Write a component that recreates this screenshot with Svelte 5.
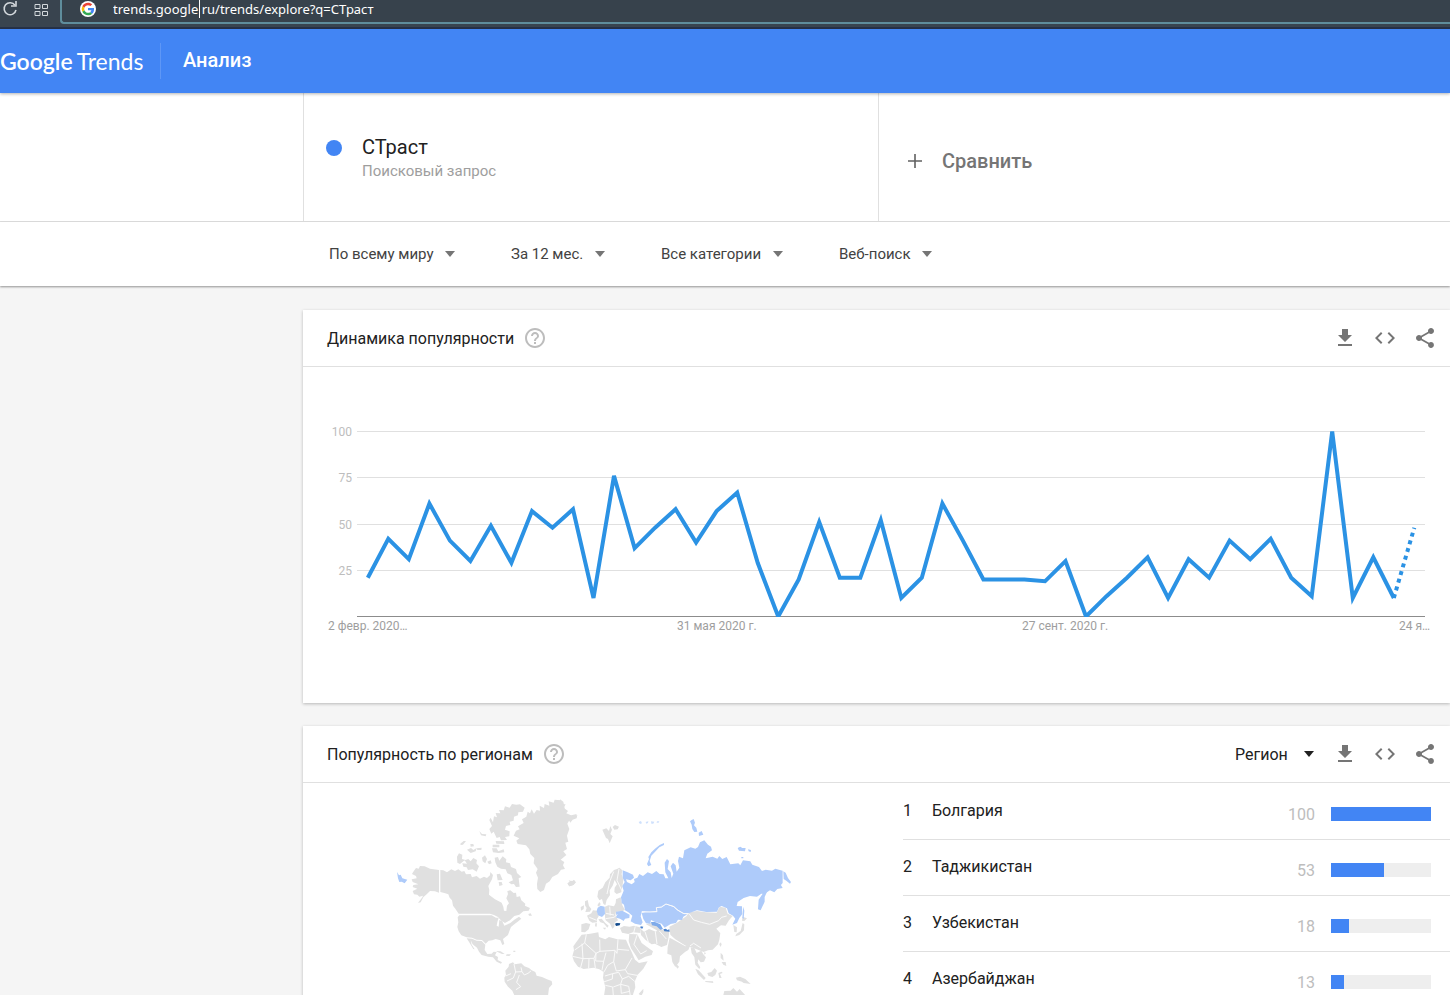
<script>
  const values = [
    21, 42, 31, 61, 41, 30, 49, 29, 57, 48, 58, 10, 76, 37, 48, 58, 40, 57, 67, 29, 0, 20, 51, 21, 21, 52, 10, 21, 61,
    41, 20, 20, 20, 19, 30, 0, 11, 21, 32, 10, 31, 21, 41, 31, 42, 21, 11, 100, 10, 32, 10, 48
  ];
  const point = (v, i) => `${(64.8 + i * 20.52).toFixed(1)},${(249.5 - v * 1.85).toFixed(1)}`;
  const points = values.map(point);
  const solid = points.slice(0, -1).join(' ');
  const dotted = points.slice(-2).join(' ');

  const ticks = [
    { label: 100, y: 64.5 },
    { label: 75, y: 110.5 },
    { label: 50, y: 157.5 },
    { label: 25, y: 203.5 }
  ];

  const dates = [
    { label: '2 февр. 2020…', x: 25 },
    { label: '31 мая 2020 г.', x: 374 },
    { label: '27 сент. 2020 г.', x: 719 },
    { label: '24 я…', x: 1096 }
  ];

  const filters = ['По всему миру', 'За 12 мес.', 'Все категории', 'Веб-поиск'];

  const regions = [
    { name: 'Болгария', value: 100 },
    { name: 'Таджикистан', value: 53 },
    { name: 'Узбекистан', value: 18 },
    { name: 'Азербайджан', value: 13 }
  ];
</script>

{#snippet help()}
  <button class="icon help" aria-label="Справка">
    <svg viewBox="0 0 24 24"><path d="M11 18h2v-2h-2v2zm1-16C6.48 2 2 6.48 2 12s4.48 10 10 10 10-4.48 10-10S17.52 2 12 2zm0 18c-4.41 0-8-3.59-8-8s3.59-8 8-8 8 3.59 8 8-3.59 8-8 8zm0-14c-2.21 0-4 1.79-4 4h2c0-1.1.9-2 2-2s2 .9 2 2c0 2-3 1.75-3 5h2c0-2.25 3-2.5 3-5 0-2.21-1.79-4-4-4z" /></svg>
  </button>
{/snippet}

{#snippet actions()}
  <button class="icon" aria-label="Скачать">
    <svg viewBox="0 0 24 24"><path d="M19 9h-4V3H9v6H5l7 7 7-7zM5 18v2h14v-2H5z" /></svg>
  </button>
  <button class="icon" aria-label="Встроить">
    <svg viewBox="0 0 24 24"><path d="M9.4 16.6L4.8 12l4.6-4.6L8 6l-6 6 6 6 1.4-1.4zm5.2 0l4.6-4.6-4.6-4.6L16 6l6 6-6 6-1.4-1.4z" /></svg>
  </button>
  <button class="icon" aria-label="Поделиться">
    <svg viewBox="0 0 24 24"><path d="M18 16.08c-.76 0-1.44.3-1.96.77L8.91 12.7c.05-.23.09-.46.09-.7s-.04-.47-.09-.7l7.05-4.11c.54.5 1.25.81 2.04.81 1.66 0 3-1.34 3-3s-1.34-3-3-3-3 1.34-3 3c0 .24.04.47.09.7L8.04 9.81C7.5 9.31 6.79 9 6 9c-1.66 0-3 1.34-3 3s1.34 3 3 3c.79 0 1.5-.31 2.04-.81l7.12 4.16c-.05.21-.08.43-.08.65 0 1.61 1.31 2.92 2.92 2.92 1.61 0 2.92-1.31 2.92-2.92s-1.31-2.92-2.92-2.92z" /></svg>
  </button>
{/snippet}

<div class="page">
  <div class="browser">
    <button class="tool" aria-label="Обновить">
      <svg width="16" height="16" viewBox="0 0 16 16" fill="none" stroke="#d3d8dc" stroke-width="1.6"><path d="M13 4.2A6 6 0 1 0 14 9" /><path d="M14 0v5H9" /></svg>
    </button>
    <button class="tool" aria-label="Экспресс-панель">
      <svg width="14" height="14" viewBox="0 0 14 14" fill="none" stroke="#d3d8dc"><path d="M1 2.500h5v4H1zM8.500 2.500h5v4h-5zM1 9.500h5v4H1zM8.500 9.500h5v4h-5z" /></svg>
    </button>
    <div class="address">
      <svg width="16" height="16" viewBox="0 0 48 48">
        <circle cx="24" cy="24" r="24" fill="#fff" />
        <g transform="translate(5 5) scale(.79)">
          <path fill="#ea4335" d="M24 9.500c3.540 0 6.710 1.220 9.210 3.600l6.850-6.850C35.900 2.380 30.470 0 24 0 14.620 0 6.510 5.380 2.560 13.220l7.980 6.190C12.430 13.720 17.740 9.500 24 9.500z" />
          <path fill="#4285f4" d="M46.980 24.550c0-1.570-.15-3.090-.38-4.550H24v9.020h12.940c-.58 2.960-2.260 5.480-4.780 7.180l7.730 6c4.510-4.180 7.090-10.360 7.090-17.650z" />
          <path fill="#fbbc05" d="M10.530 28.590a14.500 14.500 0 0 1 0-9.180l-7.980-6.190a24 24 0 0 0 0 21.560l7.980-6.190z" />
          <path fill="#34a853" d="M24 48c6.480 0 11.930-2.130 15.890-5.810l-7.730-6c-2.150 1.450-4.920 2.300-8.160 2.300-6.260 0-11.570-4.220-13.470-9.910l-7.980 6.190C6.510 42.620 14.620 48 24 48z" />
        </g>
      </svg>
      <div class="url">
        <input aria-label="Адрес" value="trends.google ru/trends/explore?q=СТраст" />
        <span class="caret"></span>
      </div>
    </div>
  </div>

  <header>
    <a class="brand" href="#trends"><b>Google</b><span>Trends</span></a>
    <h1>Анализ</h1>
  </header>

  <section class="query">
    <div class="term">
      <span class="dot"></span>
      <div>
        <div class="name">СТраст</div>
        <div class="kind">Поисковый запрос</div>
      </div>
    </div>
    <button class="compare">
      <svg width="14" height="14" viewBox="0 0 14 14" stroke="#616161" stroke-width="1.600"><path d="M7 0v14M0 7h14" /></svg>
      <span>Сравнить</span>
    </button>
  </section>

  <nav>
    {#each filters as filter}
      <div class="drop">
        <select aria-label={filter}><option>{filter}</option></select>
        <svg width="10" height="6" viewBox="0 0 10 6"><path d="M0 0h10L5 6z" /></svg>
      </div>
    {/each}
  </nav>

  <main>
    <section class="card">
      <div class="head">
        <h2>Динамика популярности</h2>
        {@render help()}
        <div class="actions">{@render actions()}</div>
      </div>
      <svg class="chart" viewBox="0 0 1147 336" role="img" aria-label="Динамика популярности">
        <defs>
          <clipPath id="plot"><path d="M54 64H1122V250H54z" /></clipPath>
        </defs>
        {#each ticks as tick}
          <path d="M54 {tick.y}H1122" stroke="#e0e0e0" />
          <text class="tick" x="49" y={tick.y + 4} text-anchor="end">{tick.label}</text>
        {/each}
        <path d="M54 249.500H1122" stroke="#8c8c8c" />
        <g clip-path="url(#plot)">
          <polyline points={solid} />
          <polyline points={dotted} stroke-dasharray="4 4" />
        </g>
        {#each dates as date}
          <text class="date" x={date.x} y="263">{date.label}</text>
        {/each}
      </svg>
    </section>

    <section class="card">
      <div class="head">
        <h2>Популярность по регионам</h2>
        {@render help()}
        <div class="actions">
          <div class="drop dark">
            <select aria-label="Детализация"><option>Регион</option></select>
            <svg width="10" height="6" viewBox="0 0 10 6"><path d="M0 0h10L5 6z" /></svg>
          </div>
          {@render actions()}
        </div>
      </div>
      <div class="split">
        <svg class="map" viewBox="0 0 600 330" role="img" aria-label="Карта мира">
          <g transform="translate(77 7) scale(.3333)">
            <g class="land">
              <path d="M100 245L108 234 116 236 120 228 134 229 150 236 177 240 177 308 165 304 150 303 140 313 130 322 122 337 114 339 127 322 129 317 118 320 112 314 102 313 98 303 112 296 98 291 100 285 115 283 98 276 95 268 110 265 108 258 96 252Z" />
              <path d="M181 240L190 241 201 247 214 238 225 243 235 238 245 245 253 243 258 253 272 252 276 262 290 258 300 266 312 260 321 264 330 256 331 246 339 255 336 268 325 288 328 300 327 314 345 328 365 338 370 350 372 362 379 363 381 347 387 340 379 325 384 312 382 303 391 301 401 309 408 308 410 321 420 319 424 331 436 341 435 347 450 354 446 362 430 364 418 374 403 378 390 391 375 399 364 392 354 381 342 375 330 371 236 371 226 356 219 347 216 331 209 323 205 313 193 309 181 306Z" />
              <path d="M238 376H335L348 383 356 383 352 397 350 407 356 410 358 390 367 394 373 407 383 403 392 398 403 389 417 380 424 386 413 395 403 403 393 411 388 424 384 435 369 447 373 462 367 465 361 451 347 447 337 451 326 452 317 461 306 450 290 449 276 443 260 442 244 436 236 424 232 411 235 397 233 382Z" />
              <path d="M260 445L276 446 290 452 305 453 316 464 314 480 322 492 335 491 341 485 350 486 345 496 354 501 353 510 366 517 363 521 350 515 339 502 325 500 305 495 297 485 291 473 278 463 272 451 275 464 284 478 280 477 269 459Z" />
              <path d="M348 483L362 484 374 492 366 492 353 486ZM380 493L393 493 388 498 378 497ZM445 372L452 370 456 377 447 377ZM400 482h6v4h-6z" />
              <path d="M378 555L376 542 386 530 387 522 399 517 404 523 424 520 433 529 447 534 455 541 466 546 470 557 486 561 501 568 515 573 517 583 507 594 504 618H404L397 602 384 590 374 575 373 563Z" />
              <path d="M401 137L408 122 419 118 414 109 431 99 426 88 439 80 443 65 450 70 455 58 462 71 470 60 480 62 479 47 492 54 494 42 508 47 506 34 521 38 524 29 544 31 541 42 557 43 551 53 564 63 559 70 573 76 580 83 570 86 562 101 568 117 561 137 565 155 556 158 561 177 550 184 559 195 542 209 553 216 549 226 555 237 543 239 534 252 517 261 509 274 498 281 492 300 481 306 472 297 471 281 474 263 468 248 473 237 461 220 463 204 451 192 448 178 438 166 413 162 409 152 418 145Z" />
              <path d="M567 91L571 80 592 75 590 85 578 89 571 98ZM563 281L569 275 566 271 576 274 582 269 588 277 580 285 568 289Z" />
              <path d="M328 90L332 83 339 97 342 79 351 82 347 69 361 70 357 60 371 61 375 49 389 53 396 42 409 44 420 43 434 53 429 65 415 67 414 76 402 80 401 92 389 95 391 105 378 108 375 119 389 124 388 139 375 141 381 150 363 151 359 141 350 144 341 125 334 131 328 117 336 108Z" />
              <path d="M338 164h20v8h-20zM347 153l25 1 1 8-24-1zM336 175l14 0 5 9 16-6 2 9-17 2-17-2zM298 123l8 9 13 1-2 6-14-3zM241 161l10-8 7 0-9 11-7 1zM271 162l9 0 2 7-10 1zM261 179l12-5 7 6 10-6-3 10-15 5zM290 175l15-2-1 7-12 0zM306 203l9-7 6 11-5 13-8-6zM322 215l10-4 3 9-8 3z" />
              <path d="M231 200L237 190 247 194 246 207 257 210 251 213 240 222 232 218ZM254 211L265 207 272 214 280 204 291 210 289 220 297 229 290 245 278 238 264 240 260 232 250 230 247 220 261 221Z" />
              <path d="M344 203L354 201 358 212 368 199 379 208 378 217 390 220 393 231 408 237 411 249 424 261 416 265 419 290 408 291 402 282 394 283 386 277 399 271 394 255 382 250 377 238 363 236 352 230 346 217ZM350 253l10-2 8 19-15 1zM356 276l9 0 3 9-10 3z" />
            </g>
            <path class="blue" d="M51 246L57 256 62 254 67 265 82 269 74 280 65 275 58 276 54 265Z" />
            <path class="border" d="M402 522L407 546 426 545 433 555 444 550 453 543M407 546L400 564 381 573M377 558L393 551M426 545L423 532M418 555L410 577 422 590 408 599" />
          </g>
          <g transform="translate(257 7) scale(.3333)">
            <g class="land">
              <path d="M0 28L10 35 14 55 8 70 15 80 50 72 47 82 30 91 20 97 0 90ZM22 280L35 272 47 277 40 285 28 289Z" />
              <path d="M127 119L139 115 147 123 151 108 156 119 151 132 158 139 149 160 144 147 138 144ZM158 111L165 105 177 110 173 118 163 119Z" />
              <path d="M112 320L115 302 128 293 136 277 149 263 150 253 162 240 171 237 178 233 187 241 185 253 190 270 187 292 184 307 170 312 163 306 164 293 171 283 164 270 158 287 149 301 150 315 140 330 136 346 130 341 126 327 118 331Z" />
              <path d="M168 328L182 322 187 346 195 360 188 363 168 366 166 374 174 391 164 398 163 411 157 416 150 401 137 391 135 381 135 350 145 346 162 349 167 339ZM112 346L118 336 122 342 117 350Z" />
              <path d="M62 351L72 346 71 357 63 362ZM75 334L83 330 87 348 94 357 90 365 76 366 80 354 75 346ZM81 377L94 370 99 361 111 362 116 379 111 387 111 397 97 398 88 392ZM64 403L78 399 91 402 86 418 75 427 64 426ZM115 388L125 386 136 399 146 407 142 413 131 400 121 397ZM128 413l10 0-3 6zM106 400l5 0-1 10-5-1z" />
              <path d="M180 414L192 408 209 410 222 407 240 412 241 429 219 427 205 432 186 428Z" />
              <path d="M208 432L232 433 245 459 258 469 279 484 275 495 256 500 236 511 228 497 213 475 206 453ZM240 415L252 425 267 417 288 425 296 414 309 420 328 424 326 442 321 465 304 471 285 461 275 463 257 450 243 435ZM258 403l16-5 20 6 12 15-13 3-24-13z" />
              <path d="M328 410L350 399 379 379 387 367 411 363 438 367 470 368 479 350 497 353 503 371 518 378 507 391 497 407 483 406 469 416 481 430 478 449 474 463 458 479 444 481 431 486 414 479 398 473 377 467 346 448 331 434Z" />
              <path d="M329 443L342 450 376 469 391 466 385 480 375 486 360 499 358 515 346 531 337 516 334 496 322 491 323 472ZM350 523l7 7-4 6-5-6zM392 472L403 474 410 489 424 482 430 493 438 502 432 515 422 517 415 508 413 518 421 532 418 537 406 524 403 501 395 490Z" />
              <path d="M406 536L416 541 437 564 432 570 414 553ZM442 549L454 546 464 534 471 542 466 555 457 561 445 557ZM475 549l10-4 3 4-8 3 5 12-7 0zM435 573l24 1 1 5-23-3zM482 488l7 8 2 16-9-8zM485 516l12 0 2 12-9-4zM528 563L540 560 556 567 572 582 551 579 546 575 531 571ZM478 462l5-5 2 7-4 7zM432 487l6 2-4 5z" />
              <path d="M548 399L553 403 552 421 538 435 526 439 529 432 542 423ZM548 380l13 5-8 8-7-1zM520 405l11 7-1 15-7-1zM490 615L493 603 512 602 520 594 531 605 539 597 557 617ZM236 612l14-16 0 10-6 12z" />
              <path d="M65 434L91 431 115 427 117 441 136 448 147 441 172 448 198 449 205 466 214 484 225 509 237 519 263 514 250 536 233 554 224 575 226 592 218 617H132L136 592 129 563 131 546 118 538 101 533 71 537 54 530 42 514 37 499 42 481 40 469Z" />
            </g>
            <g class="blue">
              <path d="M188 241L203 247 219 254 222 263 212 271 198 268 201 276 215 283 224 276 222 267 232 263 238 252 249 258 263 247 276 252 289 243 299 252 311 253 316 265 325 265 316 247 314 218 321 207 327 213 323 237 332 247 335 264 340 251 332 229 339 218 347 226 350 245 358 233 354 213 357 200 369 205 373 181 392 172 406 176 414 171 420 157 433 151 444 164 453 170 456 181 442 191 437 205 458 200 472 206 478 198 487 207 500 201 511 223 535 220 541 226 549 211 571 214 577 224 597 231 606 243 617 239 636 242 646 236 668 242V279L663 285 668 294 652 297 643 307 630 301 613 312 604 311 591 320 570 318 551 324 533 336 530 348 546 349 547 372 538 384 531 399 517 404 526 386 519 377 506 370 501 355 485 348 477 352 471 365 439 366 411 361 386 370 370 370 351 358 340 348 318 342 304 351 289 353 291 364 270 365 246 364 242 379 248 397 243 405 225 401 212 394 217 377 205 367 195 361 192 344 185 339 183 322 191 302 187 288 194 276 188 263Z" />
              <path d="M670 244L677 248 684 264 693 276 690 281 679 272 671 267ZM626 295L614 321 614 335 602 361 594 358 596 329 607 313 616 303ZM261 222L267 207 265 201 274 187 285 176 299 165 312 159 312 165 298 172 284 187 274 197 269 213 274 225 265 229ZM390 94L395 90 401 87 405 98 402 106 409 113 412 125 403 126 397 117 395 104ZM416 128L425 123 430 134 417 138ZM533 174L541 170 547 174 557 174 555 184 537 182ZM564 178l9 2-1 6-6-2zM544 201h6v4h-6zM550 350l3 12-2 25-4-3z" />
              <path opacity=".6" d="M236 96l7-3 3 7-6 2zM257 96l8-2-1 5-5 2zM273 94l10 1-3 6-6 0zM291 94l7 0-2 4-6 0z" />
              <path d="M113 353L122 347 134 350 135 372 126 381 114 376 110 363ZM168 365L187 362 209 374 208 384 195 386 191 393 180 386 169 383Z" />
              <path d="M245 369L258 365 290 366 291 354 306 352 318 343 340 350 352 361 370 371 382 373 370 380 366 390 354 389 348 399 332 402 314 413 305 401 285 396 273 390 271 401 258 400 250 387Z" />
            </g>
            <path class="border" d="M245 366L270 366 291 365 289 353 304 351 318 342 342 350 354 361 372 371 386 371M388 372L401 390 424 397 449 403 476 392 485 382 500 378M161 245L149 275 141 312M177 237L171 271 187 305M138 370L162 375M137 386L162 382 172 374M149 350L151 376M88 382L110 391M226 409L220 432M255 425L266 459M286 425L291 462M298 423L319 447M232 433L222 463 242 492 260 482M390 468L401 460 423 474" />
            <path class="border" d="M79 433L74 459 44 480M74 459L108 490 120 484 119 449M120 484L165 481 171 490 174 448M174 478L207 481M66 461L69 506 37 499M69 506L61 536M69 506L102 505 108 490M87 506L86 535M102 505L106 534M108 490L107 513 131 514 138 488M131 514L126 541M165 483L161 515 143 526 132 546M161 515L169 543 196 539 216 504M196 539L203 551 236 557M135 558L158 551 157 567 131 576M158 551L176 547 187 567 182 583 206 589 211 617M187 567L206 559 224 574M136 586L158 591 160 617M160 591L182 583M182 583L184 610 209 604" />
            <path class="mid" d="M273 396L285 396 301 403 309 417 301 419 290 409 276 406Z" />
            <path class="deep" d="M310 418L318 416 322 420 328 418 329 425 313 424ZM242 409l8 1-3 6-6-2z" />
            <path class="top" d="M165 401L170 399 181 400 179 406 168 408Z" />
          </g>
        </svg>
        <table>
          <tbody>
            {#each regions as region, i}
              <tr>
                <td class="rank">{i + 1}</td>
                <td>{region.name}</td>
                <td class="score">{region.value}</td>
                <td class="meter"><div class="track"><div class="fill" style="width: {region.value}%"></div></div></td>
              </tr>
            {/each}
          </tbody>
        </table>
      </div>
    </section>
  </main>
</div>

<style>
  :global(body) {
    background: #f5f5f5;
  }
  .page {
    display: flex;
    flex-direction: column;
    height: 100vh;
    overflow: hidden;
    font-family: Roboto, sans-serif;
    color: #212121;
  }
  .page > * {
    flex-shrink: 0;
    box-sizing: border-box;
  }
  button,
  select,
  input {
    margin: 0;
    padding: 0;
    border: 0;
    background: none;
    font: inherit;
    color: inherit;
  }
  select {
    appearance: none;
  }
  svg {
    display: block;
  }
  h1,
  h2 {
    margin: 0;
  }
  .browser {
    display: flex;
    height: 29px;
    gap: 16px;
    padding-left: 2px;
    background: #39444f;
    border-bottom: 2px solid #26324a;
  }
  .tool {
    height: 17px;
  }
  .address {
    flex: 1;
    display: flex;
    align-items: center;
    gap: 17px;
    height: 24px;
    box-sizing: border-box;
    margin-left: -4px;
    padding: 0 0 5px 18px;
    border: solid #5f8d9c;
    border-width: 0 0 2px 2px;
    border-bottom-left-radius: 4px;
    background: #37424c;
  }
  .url {
    position: relative;
    flex: 1;
  }
  .url input {
    display: block;
    width: 100%;
    height: 18px;
    font: 13px/18px "Noto Sans", "Open Sans", sans-serif;
    color: #fff;
  }
  .caret {
    position: absolute;
    left: 86px;
    top: 0;
    width: 1px;
    height: 18px;
    background: #fff;
  }
  header {
    position: relative;
    display: flex;
    align-items: center;
    height: 64px;
    background: #4285f4;
    color: #fff;
    box-shadow: 0 1px 3px rgba(0, 0, 0, 0.3);
  }
  .brand {
    display: flex;
    align-items: center;
    gap: 4px;
    height: 36px;
    width: 160px;
    border-right: 1px solid #5e97f6;
    font: 23px/36px Lato, sans-serif;
    color: #fff;
    text-decoration: none;
  }
  .brand b {
    font-weight: 600;
  }
  h1 {
    margin-left: 22px;
    font-size: 20px;
    line-height: 24px;
    padding-bottom: 2px;
    font-weight: 500;
  }
  .query {
    display: grid;
    grid-template-columns: 576fr 571fr;
    height: 129px;
    padding-left: 303px;
    background: #fff;
    border-bottom: 1px solid #e0e0e0;
  }
  .term {
    display: flex;
    gap: 20px;
    padding: 42px 22px;
    border-left: 1px solid #e0e0e0;
    border-right: 1px solid #e0e0e0;
  }
  .dot {
    width: 16px;
    height: 16px;
    margin-top: 5px;
    border-radius: 50%;
    background: #4285f4;
  }
  .name {
    font-size: 20px;
    line-height: 25px;
  }
  .kind {
    font-size: 15px;
    line-height: 22px;
    color: #9e9e9e;
  }
  .compare {
    display: flex;
    align-items: center;
    gap: 20px;
    padding: 4px 29px 0;
    font-size: 20px;
    font-weight: 500;
    color: #757575;
  }
  nav {
    position: relative;
    display: flex;
    gap: 56px;
    height: 64px;
    padding-left: 329px;
    background: #fff;
    box-shadow: 0 1px 2px rgba(0, 0, 0, 0.4);
    font-size: 15px;
    color: #424242;
  }
  .drop {
    display: flex;
    align-items: center;
    gap: 11px;
    fill: #757575;
  }
  main {
    display: flex;
    flex-direction: column;
    gap: 23px;
    padding: 24px 0 24px 303px;
  }
  .card {
    background: #fff;
    box-shadow: 0 1px 3px rgba(0, 0, 0, 0.25);
  }
  .head {
    display: flex;
    align-items: center;
    gap: 9px;
    height: 56px;
    padding: 0 13px 0 24px;
    border-bottom: 1px solid #e0e0e0;
  }
  h2 {
    font-size: 16px;
    font-weight: 400;
  }
  .icon {
    width: 24px;
    height: 24px;
    fill: #757575;
  }
  .help {
    fill: #bdbdbd;
  }
  .actions {
    display: flex;
    align-items: center;
    gap: 16px;
    margin-left: auto;
  }
  .dark {
    gap: 16px;
    margin-right: 3px;
    fill: #212121;
  }
  .chart {
    width: 100%;
    font-size: 12px;
  }
  .chart polyline {
    fill: none;
    stroke: #2b92e4;
    stroke-width: 4;
  }
  .tick {
    fill: #bdbdbd;
  }
  .date {
    fill: #9e9e9e;
  }
  .split {
    display: grid;
    grid-template-columns: 600fr 547fr;
    align-items: start;
  }
  .map {
    width: 100%;
  }
  .land {
    fill: #e0e0e0;
  }
  .blue {
    fill: #aecbfa;
  }
  .border {
    fill: none;
    stroke: #fafafa;
    stroke-width: 3;
  }
  .mid {
    fill: #7fabea;
  }
  .deep {
    fill: #4c83cc;
  }
  .top {
    fill: #124a8c;
  }
  table {
    width: 100%;
    margin-top: 1px;
    border-collapse: collapse;
  }
  td {
    height: 53px;
    padding: 0 0 2px;
    border-bottom: 1px solid #e0e0e0;
    font-size: 16px;
  }
  .rank {
    width: 29px;
  }
  .score {
    padding-top: 7px;
    height: 46px;
    text-align: right;
    color: #bdbdbd;
  }
  .meter {
    width: 100px;
    height: 46px;
    padding: 7px 19px 2px 16px;
  }
  .track {
    height: 14px;
    background: #eee;
  }
  .fill {
    height: 100%;
    background: #4285f4;
  }
</style>
